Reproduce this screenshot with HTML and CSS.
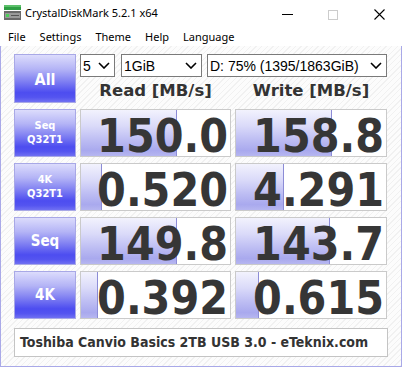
FILE: index.html
```html
<!DOCTYPE html>
<html>
<head>
<meta charset="utf-8">
<link rel="stylesheet" href="styles.css">
</head>
<body>
<div class="window">
  <div class="titlebar">
    <svg class="app-icon" width="17" height="16" viewBox="0 0 17 16">
      <rect x="0" y="0" width="17" height="5" fill="#2f9e44"/>
      <rect x="0" y="0" width="17" height="2" fill="#5cc06a"/>
      <rect x="0" y="6" width="17" height="9" fill="#6a6a6a"/>
      <rect x="1" y="8" width="15" height="5" fill="#9a9a9a"/>
      <rect x="2" y="9" width="3" height="3" fill="#4ccf5a"/>
      <rect x="7" y="10" width="8" height="1" fill="#555"/>
    </svg>
    <span class="title">CrystalDiskMark 5.2.1 x64</span>
    <div class="controls">
      <div class="ctrl"><svg width="11" height="11" viewBox="0 0 11 11"><line x1="0" y1="5.5" x2="11" y2="5.5" stroke="#000" stroke-width="1"/></svg></div>
      <div class="ctrl"><svg width="10" height="10" viewBox="0 0 10 10"><rect x="0.5" y="0.5" width="9" height="9" fill="none" stroke="#cccccc" stroke-width="1"/></svg></div>
      <div class="ctrl"><svg width="11" height="11" viewBox="0 0 11 11"><path d="M0.5 0.5 L10.5 10.5 M10.5 0.5 L0.5 10.5" stroke="#000" stroke-width="1.1" fill="none"/></svg></div>
    </div>
  </div>
  <div class="menubar">
    <span>File</span><span>Settings</span><span>Theme</span><span>Help</span><span>Language</span>
  </div>
  <div class="content">
    <div class="grid">
      <div class="btn btn-all">All</div>
      <div class="topcell">
        <div class="selects">
          <div class="select sel-count"><span>5</span><svg class="chev" width="12" height="7" viewBox="0 0 12 7"><polyline points="1,1 6,6 11,1" fill="none" stroke="#000" stroke-width="1.6"/></svg></div>
          <div class="select sel-size"><span>1GiB</span><svg class="chev" width="12" height="7" viewBox="0 0 12 7"><polyline points="1,1 6,6 11,1" fill="none" stroke="#000" stroke-width="1.6"/></svg></div>
          <div class="select sel-drive"><span>D: 75% (1395/1863GiB)</span><svg class="chev" width="12" height="7" viewBox="0 0 12 7"><polyline points="1,1 6,6 11,1" fill="none" stroke="#000" stroke-width="1.6"/></svg></div>
        </div>
        <div class="headers">
          <div class="head">Read [MB/s]</div>
          <div class="head">Write [MB/s]</div>
        </div>
      </div>

      <div class="btn btn-small">Seq<br>Q32T1</div>
      <div class="cell"><div class="bar" style="width:96px"></div><span class="num">150.0</span></div>
      <div class="cell"><div class="bar" style="width:96px"></div><span class="num">158.8</span></div>

      <div class="btn btn-small">4K<br>Q32T1</div>
      <div class="cell"><div class="bar" style="width:21px"></div><span class="num">0.520</span></div>
      <div class="cell"><div class="bar" style="width:48px"></div><span class="num">4.291</span></div>

      <div class="btn btn-mid">Seq</div>
      <div class="cell"><div class="bar" style="width:96px"></div><span class="num">149.8</span></div>
      <div class="cell"><div class="bar" style="width:94px"></div><span class="num">143.7</span></div>

      <div class="btn btn-mid">4K</div>
      <div class="cell"><div class="bar" style="width:17px"></div><span class="num">0.392</span></div>
      <div class="cell"><div class="bar" style="width:23px"></div><span class="num">0.615</span></div>
    </div>
    <div class="footer">Toshiba Canvio Basics 2TB USB 3.0 - eTeknix.com</div>
  </div>
</div>
</body>
</html>
```

FILE: styles.css
```css
* { box-sizing: border-box; }

body {
  margin: 0;
  width: 402px;
  height: 367px;
  overflow: hidden;
  background: #ffffff;
  font-family: "Noto Sans", "Liberation Sans", sans-serif;
  color: #000;
}

.window {
  width: 402px;
  height: 367px;
  display: flex;
  flex-direction: column;
}

.titlebar {
  height: 26px;
  display: flex;
  align-items: center;
  flex: none;
}

.app-icon {
  margin-left: 4px;
  flex: none;
}

.title {
  margin-left: 4px;
  font-size: 11px;
  line-height: 26px;
}

.controls {
  margin-left: auto;
  display: flex;
  height: 26px;
}

.ctrl {
  width: 46px;
  height: 26px;
  display: flex;
  align-items: center;
  justify-content: center;
  padding-top: 3px;
}

.menubar {
  height: 20px;
  flex: none;
  display: flex;
  align-items: center;
  padding-left: 1px;
  font-size: 11px;
}

.menubar span {
  padding: 0 7px;
}

.content {
  flex: 1;
  border: 1px solid #a9a9e8;
  border-top: none;
  background: repeating-linear-gradient(-45deg, #f1f1f1 0 1px, #fcfcfc 1px 4px);
  padding: 8px 13px 0 13px;
}

.grid {
  display: grid;
  grid-template-columns: 62px 151px 152px;
  grid-template-rows: 49px 48px 48px 48px 48px;
  column-gap: 4px;
  row-gap: 6px;
}

.btn {
  border: 1px solid #a8a8e6;
  background: linear-gradient(to bottom, #dcdcfc 0%, #b4b4f6 30%, #8282f2 55%, #4d4df0 80%, #5454f0 90%, #7070f2 100%);
  color: #ffffff;
  font-family: "DejaVu Sans Condensed", "DejaVu Sans", sans-serif;
  font-stretch: condensed;
  font-weight: bold;
  display: flex;
  align-items: center;
  justify-content: center;
  text-align: center;
}

.btn-all {
  font-size: 16px;
  padding-top: 2px;
}

.btn-small {
  font-size: 11px;
  line-height: 14px;
}

.btn-mid {
  font-size: 15px;
}

.topcell {
  grid-column: 2 / 4;
  display: flex;
  flex-direction: column;
}

.selects {
  height: 23px;
  display: flex;
  gap: 6px;
}

.select {
  height: 23px;
  border: 1px solid #7a7a7a;
  background: #ffffff;
  display: flex;
  align-items: center;
  padding: 0 4px 0 2px;
  font-family: "Liberation Sans", Arial, sans-serif;
  font-size: 14px;
  color: #000;
}

.select .chev {
  margin-left: auto;
  flex: none;
}

.sel-count { width: 35px; }
.sel-size { width: 81px; }
.sel-drive { width: 180px; margin-left: -1px; }

.headers {
  flex: 1;
  display: grid;
  grid-template-columns: 151px 152px;
  column-gap: 4px;
}

.head {
  text-align: center;
  font-family: "DejaVu Sans", sans-serif;
  font-weight: bold;
  font-size: 16.5px;
  line-height: 25px;
  padding-top: 1px;
  color: #333333;
}

.cell {
  position: relative;
  height: 48px;
  background: #ffffff;
  border: 1px solid #cacaca;
  text-align: right;
  padding: 6px 2px 0 0;
  font-family: "DejaVu Sans Condensed", "DejaVu Sans", sans-serif;
  font-stretch: condensed;
  font-weight: bold;
  font-size: 46px;
  line-height: 40px;
  color: #363636;
}

.bar {
  position: absolute;
  left: 0;
  top: 0;
  bottom: 0;
  border-right: 1px solid #8c8cd6;
  background: linear-gradient(to bottom, #f2f2fd 0%, #dadaf9 35%, #bdbdf3 65%, #a9a9ee 88%, #b6b6f0 100%);
}

.num {
  position: relative;
}

.footer {
  margin-top: 9px;
  height: 29px;
  background: #ffffff;
  border: 1px solid #c4c4c4;
  padding-left: 5px;
  font-family: "DejaVu Sans Condensed", "DejaVu Sans", sans-serif;
  font-stretch: condensed;
  font-weight: bold;
  font-size: 14px;
  line-height: 27px;
  color: #333333;
}
```
